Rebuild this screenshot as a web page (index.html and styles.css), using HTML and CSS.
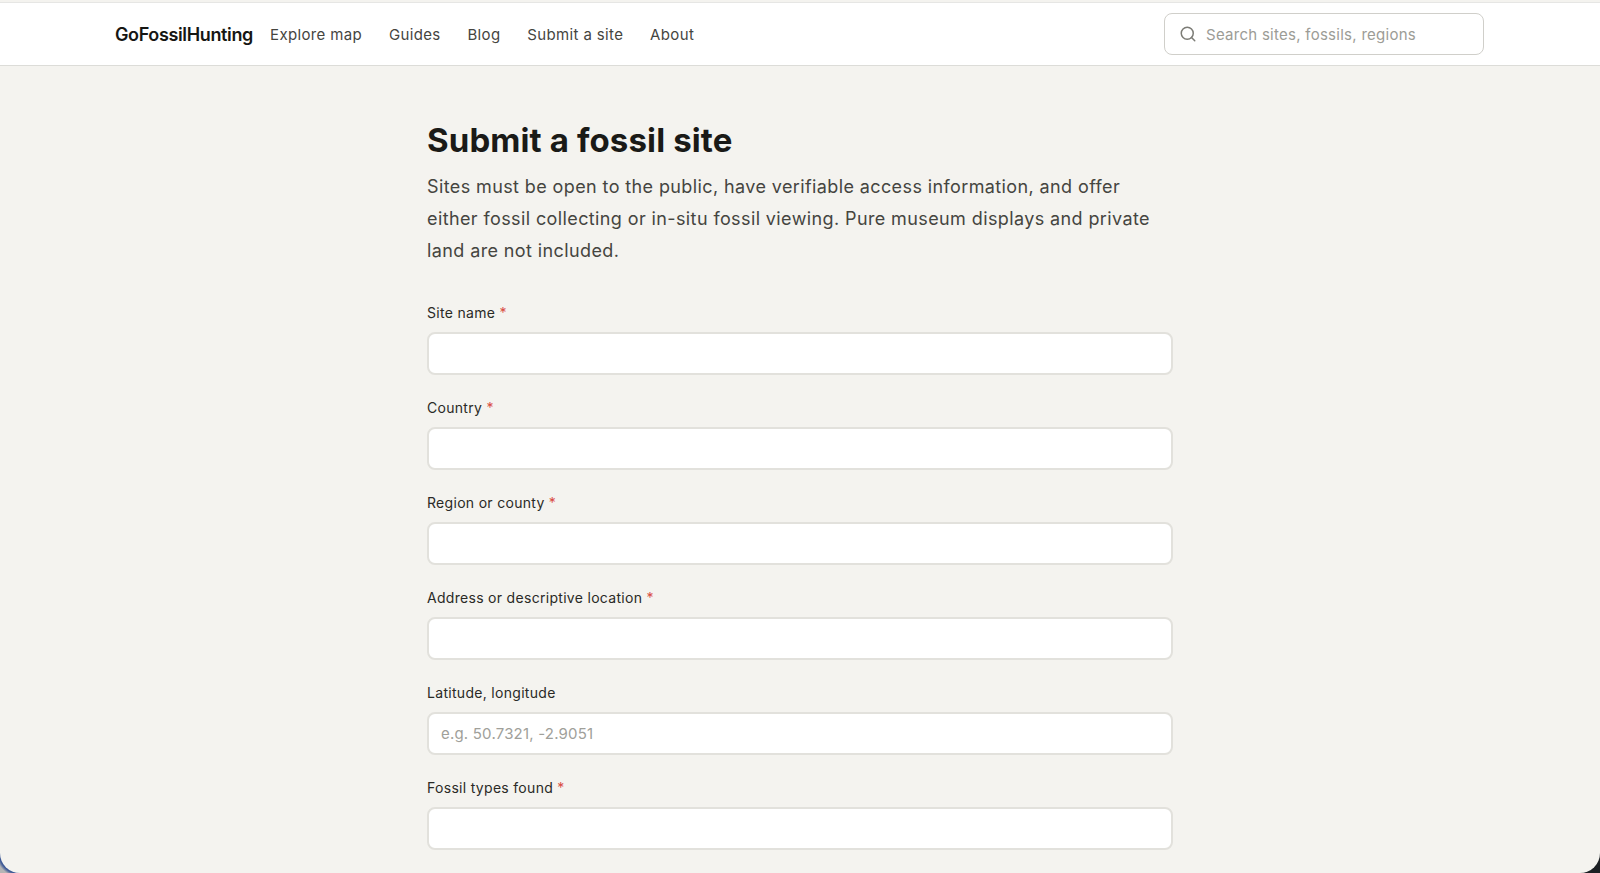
FILE: index.html
```html
<!DOCTYPE html>
<html lang="en">
<head>
<meta charset="utf-8">
<title>Submit a fossil site</title>
<link rel="stylesheet" href="styles.css">
</head>
<body>
<div class="window">
  <header class="topbar">
    <a class="logo" href="#">GoFossilHunting</a>
    <nav class="nav">
      <a href="#">Explore map</a>
      <a href="#">Guides</a>
      <a href="#">Blog</a>
      <a href="#">Submit a site</a>
      <a href="#">About</a>
    </nav>
    <div class="search">
      <svg class="search-icon" viewBox="0 0 24 24" fill="none" stroke="currentColor" stroke-width="2" stroke-linecap="round" stroke-linejoin="round"><circle cx="11" cy="11" r="8"/><path d="m21 21-4.3-4.3"/></svg>
      <span class="search-text">Search sites, fossils, regions</span>
    </div>
  </header>
  <main class="content">
    <h1>Submit a fossil site</h1>
    <p class="intro">Sites must be open to the public, have verifiable access information, and offer either fossil collecting or in-situ fossil viewing. Pure museum displays and private land are not included.</p>
    <form class="form">
      <div class="field"><label>Site name <span class="req">*</span></label><input type="text"></div>
      <div class="field"><label>Country <span class="req">*</span></label><input type="text"></div>
      <div class="field"><label>Region or county <span class="req">*</span></label><input type="text"></div>
      <div class="field"><label>Address or descriptive location <span class="req">*</span></label><input type="text"></div>
      <div class="field"><label>Latitude, longitude</label><input type="text" placeholder="e.g. 50.7321, -2.9051"></div>
      <div class="field"><label>Fossil types found <span class="req">*</span></label><input type="text"></div>
    </form>
  </main>
</div>
</body>
</html>
```
FILE: styles.css
```css
* { box-sizing: border-box; }
html, body { margin: 0; height: 873px; overflow: hidden; }
body {
  background:
    radial-gradient(circle 30px at 20px 853px, #3f5a96 21px, #b5b5b5 24px) left top / 50% 100% no-repeat,
    #1c2024;
  font-family: Inter, "Liberation Sans", sans-serif;
}
.window {
  height: 873px;
  overflow: hidden;
  background: #f4f3ef;
  border-radius: 0 0 20px 20px;
}
.topbar {
  height: 64px;
  display: flex;
  align-items: center;
  padding: 0 116px 0 115px;
  background: #fff;
  border-top: 1px solid #e6e6e4;
  border-bottom: 1px solid #dcdcd8;
  margin-top: 2px;
}
.logo {
  font-size: 18px;
  font-weight: 600;
  letter-spacing: -0.36px;
  color: #161613;
  text-decoration: none;
}
.nav { display: flex; gap: 26.8px; margin-left: 17px; }
.nav a {
  font-size: 15px;
  letter-spacing: 0.36px;
  color: #45453f;
  text-decoration: none;
}
.search {
  margin-left: auto;
  width: 320px;
  height: 42px;
  display: flex;
  align-items: center;
  gap: 9px;
  padding-left: 14px;
  border: 1px solid #d0cfca;
  border-radius: 8px;
  background: #fff;
}
.search-icon { width: 18px; height: 18px; color: #7c7c76; flex: none; }
.search-text { font-size: 15px; letter-spacing: 0.27px; color: #9c9c96; }
.content { width: 746px; margin: 0 auto; padding-top: 54px; }
h1 {
  margin: 0;
  font-size: 33px;
  line-height: 40px;
  font-weight: 700;
  letter-spacing: 0.12px;
  color: #1a1a17;
}
.intro {
  margin: 11px 0 0;
  font-size: 18px;
  line-height: 32.2px;
  letter-spacing: 0.39px;
  color: #45453f;
}
.form { margin-top: 32px; display: flex; flex-direction: column; gap: 20px; }
.field { display: flex; flex-direction: column; gap: 7px; }
.field label { font-size: 14px; line-height: 25px; font-weight: 400; letter-spacing: 0.3px; color: #2a2a26; }
.req { color: #d94b43; }
.field input {
  height: 43px;
  padding: 0 12px;
  font: 15px Inter, "Liberation Sans", sans-serif;
  letter-spacing: 0.2px;
  border: 2px solid #e2e1dc;
  border-radius: 8px;
  background: #fff;
  outline: 0;
}
.field input::placeholder { color: #a0a09a; opacity: 1; }
```
